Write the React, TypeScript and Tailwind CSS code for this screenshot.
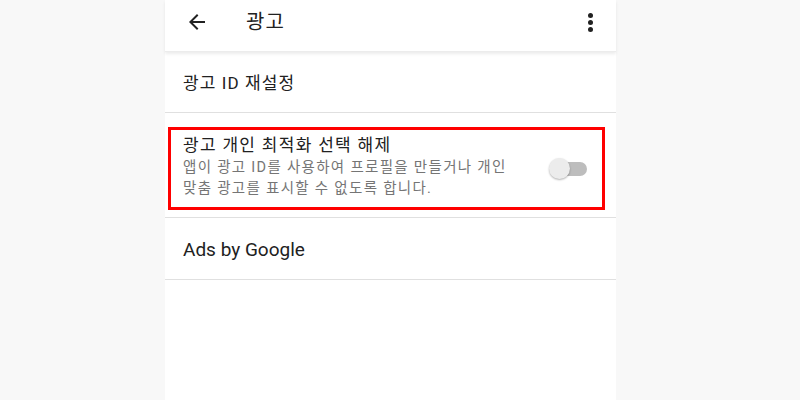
const font = { fontFamily: 'Roboto, "Noto Sans CJK KR", sans-serif' }

function Toggle() {
  return (
    <div className="relative w-[38px] h-[22px] flex items-center">
      <div className="absolute left-[10px] right-0 h-[14px] rounded-full bg-[#bdbdbd]" />
      <div className="absolute left-0 w-[21px] h-[21px] rounded-full bg-[#ececec] shadow-[0_1px_2px_rgba(0,0,0,0.3)]" />
    </div>
  )
}

export default function App() {
  return (
    <div className="w-[800px] h-[400px] bg-[#f8f8f8] overflow-hidden" style={font}>
      <div className="ml-[165px] w-[451px] h-[400px] bg-white flex flex-col">
        <header className="h-[52px] flex items-center pl-[20px] pr-[14px] pb-[7px] shadow-[0_2px_3px_rgba(0,0,0,0.08)] border-b border-[#ececec] relative z-10">
          <svg width="24" height="24" viewBox="0 0 24 24" className="text-[#212121]">
            <path d="M20 11H7.83l5.59-5.59L12 4l-8 8 8 8 1.41-1.41L7.83 13H20v-2z" fill="currentColor" />
          </svg>
          <h1 className="ml-[37px] text-[20px] text-[#212121] leading-none tracking-[1px]">광고</h1>
          <div className="ml-auto flex flex-col gap-[2px] items-center w-[24px]">
            <span className="w-[5px] h-[5px] rounded-full bg-[#212121]" />
            <span className="w-[5px] h-[5px] rounded-full bg-[#212121]" />
            <span className="w-[5px] h-[5px] rounded-full bg-[#212121]" />
          </div>
        </header>
        <div className="h-[61px] flex items-center pl-[18px] pt-[4px] border-b border-[#e0e0e0] text-[17px] text-[#212121] tracking-[1.1px]">
          광고 ID 재설정
        </div>
        <div className="h-[105px] flex items-start pt-[14px] px-[3px] border-b border-[#e0e0e0]">
          <div className="w-[437px] h-[83px] border-[3px] border-[#ff0000] flex items-center pl-[12px] pr-[15px] pb-[4px]">
            <div className="flex-1">
              <div className="text-[17px] text-[#212121] leading-[22px] tracking-[1.3px]">광고 개인 최적화 선택 해제</div>
              <div className="text-[14.5px] text-[#757575] leading-[21px] mt-[1px] tracking-[1.3px]">
                앱이 광고 ID를 사용하여 프로필을 만들거나 개인
                <br />
                맞춤 광고를 표시할 수 없도록 합니다.
              </div>
            </div>
            <div className="mt-[4px]">
              <Toggle />
            </div>
          </div>
        </div>
        <div className="h-[62px] flex items-center pl-[18px] pt-[3px] border-b border-[#e0e0e0] text-[19px] text-[#212121]">
          Ads by Google
        </div>
      </div>
    </div>
  )
}
